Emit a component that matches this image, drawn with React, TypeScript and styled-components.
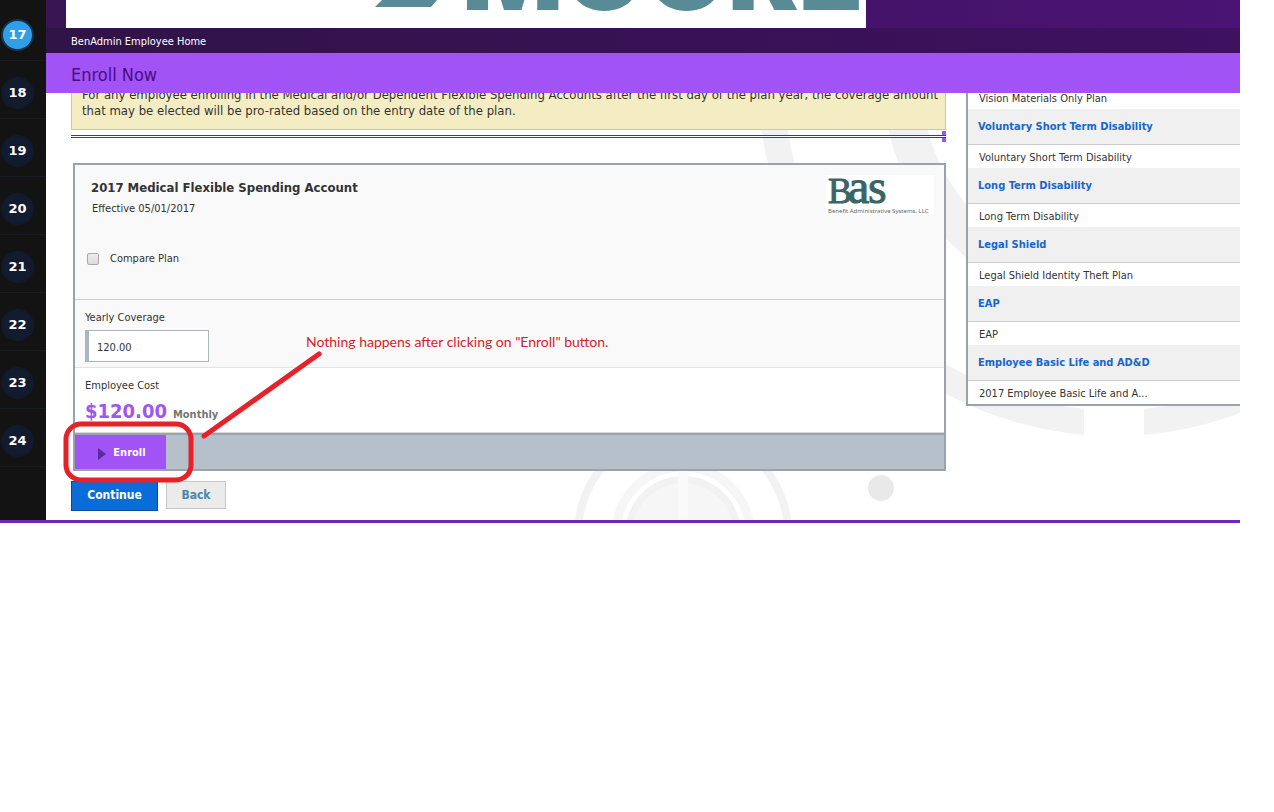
import React from "react";
import styled, { createGlobalStyle } from "styled-components";

const sans = `"DejaVu Sans Condensed", "Noto Sans", sans-serif`;

const Global = createGlobalStyle`
  *, *::before, *::after { box-sizing: border-box; }
  body { margin: 0; background: #fff; color: #333; font-family: ${sans}; font-size: 11px; line-height: 16px; }
  h1, h2, h3, p, ul, ol { margin: 0; padding: 0; font-weight: inherit; }
  ul, ol { list-style: none; }
`;

const Page = styled.div`
  position: relative;
  display: flex;
  margin-right: 34px;
  border-bottom: 3px solid #6f27ba;
  overflow: hidden;
`;

const Days = styled.nav`
  flex: 0 0 46px;
  padding-top: 3px;
  background: #131313;
`;

const Day = styled.li`
  height: 58px;
  padding: 16px 0 0 1px;
  border-bottom: 1px solid #161c26;
`;

const DayLink = styled.a<{ $current?: boolean }>`
  display: flex;
  align-items: center;
  justify-content: center;
  width: 33px;
  height: 32px;
  padding-bottom: 1px;
  border: 2px solid ${(p) => (p.$current ? "#18324c" : "#121a2b")};
  border-radius: 50%;
  background: ${(p) => (p.$current ? "#309fe9" : "#121b30")};
  color: #fff;
  font: bold 13px/16px "DejaVu Sans", sans-serif;
  text-decoration: none;
`;

const Main = styled.main`
  flex: 1;
  min-width: 0;
  position: relative;
`;

const Banner = styled.header`
  height: 28px;
  padding-left: 20px;
  background: linear-gradient(90deg, #3a1553, #4a1374);
`;

const LogoPanel = styled.div`
  width: 800px;
  max-width: 100%;
  height: 28px;
  background: #fff;
  overflow: hidden;
`;

const Crumbs = styled.div`
  padding: 6px 25px 3px;
  background: linear-gradient(90deg, #301347, #3f1161);
`;

const CrumbLink = styled.a`
  color: #fff;
  text-decoration: none;
`;

const TitleBar = styled.div`
  padding: 12px 25px 8px;
  background: #a153f6;
`;

const Title = styled.h1`
  color: #4a0d82;
  font-size: 18px;
  line-height: 20px;
`;

const Body = styled.div`
  position: relative;
  display: flex;
  gap: 20px;
  padding-left: 25px;
  overflow: hidden;
`;

const Backdrop = styled.svg`
  position: absolute;
  inset: 0;
`;

const Plans = styled.section`
  position: relative;
  flex: 1;
  min-width: 0;
  padding-bottom: 9px;
`;

const NoticeClip = styled.div`
  display: flex;
  align-items: flex-end;
  height: 37px;
  overflow: hidden;
`;

const Notice = styled.p`
  width: 100%;
  padding: 10px 4px 10px 10px;
  border: 1px solid #e2c766;
  background: #f4edc4;
  font-size: 13px;
`;

const Divider = styled.div`
  display: flex;
  align-items: center;
  height: 11px;
  margin: 1px 0 21px;
  border-right: 4px solid #9d55ee;
`;

const Rule = styled.div`
  flex: 1;
  height: 3px;
  margin-right: -4px;
  border: solid #6320a8;
  border-width: 1px 0;
  background: #fff;
`;

const Card = styled.form`
  margin-left: 2px;
  border: 2px solid #9aa2ab;
  background: #fff;
`;

const CardHead = styled.div`
  display: flex;
  justify-content: space-between;
  height: 135px;
  padding: 10px 10px 0 12px;
  border-bottom: 1px solid #cfcfcf;
  background: #f9f9f9;
`;

const PlanName = styled.h2`
  padding: 5px 0 0 4px;
  font-size: 13px;
  font-weight: bold;
`;

const Effective = styled.p`
  padding: 5px 0 34px 5px;
`;

const Check = styled.label`
  display: flex;
  align-items: center;
  gap: 11px;
`;

const Tick = styled.input`
  appearance: none;
  width: 12px;
  height: 12px;
  margin: 0;
  border: 1px solid #a9a9a9;
  border-radius: 2px;
  background: linear-gradient(#ececec, #dcdcdc);
`;

const Field = styled.div<{ $shaded?: boolean }>`
  display: flex;
  flex-direction: column;
  align-items: flex-start;
  padding: 10px 10px 5px;
  border-bottom: 1px solid ${(p) => (p.$shaded ? "#e3e3e3" : "#d8d8d8")};
  background: ${(p) => (p.$shaded ? "#f9f9f9" : "#fff")};
`;

const Amount = styled.input`
  width: 124px;
  height: 32px;
  margin-top: 4px;
  padding: 2px 8px 0;
  border: 1px solid #a9b7bd;
  border-left-width: 4px;
  background: #fff;
  color: #333;
  font: 11px/16px ${sans};
`;

const Cost = styled.div`
  display: flex;
  align-items: baseline;
  gap: 6px;
  padding-top: 5px;
  color: #757575;
  font-weight: bold;
  line-height: 24px;
`;

const Price = styled.strong`
  color: #a057ee;
  font-size: 20px;
`;

const Actions = styled.div`
  display: flex;
  border-top: 2px solid #9aa2ab;
  background: #b6c0ca;
`;

const EnrollButton = styled.button`
  display: flex;
  align-items: center;
  justify-content: center;
  gap: 7px;
  width: 91px;
  height: 34px;
  padding: 2px 0 0 3px;
  border: 0;
  background: #a153f6;
  color: #fff;
  font: bold 11px/16px ${sans};
`;

const Footer = styled.div`
  display: flex;
  gap: 8px;
  padding-top: 10px;
`;

const FooterButton = styled.button<{ $primary?: boolean }>`
  width: ${(p) => (p.$primary ? 87 : 60)}px;
  height: ${(p) => (p.$primary ? 30 : 28)}px;
  padding: 0 0 ${(p) => (p.$primary ? 2 : 0)}px;
  border: 1px solid ${(p) => (p.$primary ? "#0a4a9a" : "#c6c6c6")};
  background: ${(p) => (p.$primary ? "#0a6cd8" : "#ebebeb")};
  color: ${(p) => (p.$primary ? "#fff" : "#4488b0")};
  font: bold 12px/16px ${sans};
`;

const Benefits = styled.aside`
  position: relative;
  flex: 0 0 274px;
  align-self: flex-start;
  border: solid #9aa2ab;
  border-width: 0 0 2px 2px;
  background: #fff;
`;

const BenefitTitle = styled.h3`
  padding: 10px 10px 0;
  height: 36px;
  border-bottom: 1px solid #cdcdcd;
  background: #f0f0f0;
  color: #1766cc;
  font-size: 11px;
  font-weight: bold;
`;

const BenefitItem = styled.p<{ $first?: boolean }>`
  height: ${(p) => (p.$first ? 18 : 23)}px;
  padding: ${(p) => (p.$first ? 0 : 5)}px 11px 0;
  margin-top: ${(p) => (p.$first ? -2 : 0)}px;
`;

const Markup = styled.svg`
  position: absolute;
  top: 0;
  left: 0;
  pointer-events: none;
`;

const Remark = styled.p`
  position: absolute;
  top: 334px;
  left: 306px;
  color: #d4222a;
  font: 14px/16px Lato, sans-serif;
  white-space: nowrap;
`;

const days = [17, 18, 19, 20, 21, 22, 23, 24];

const benefits = [
  ["Voluntary Short Term Disability", "Voluntary Short Term Disability"],
  ["Long Term Disability", "Long Term Disability"],
  ["Legal Shield", "Legal Shield Identity Theft Plan"],
  ["EAP", "EAP"],
  ["Employee Basic Life and AD&D", "2017 Employee Basic Life and A..."],
];

function MooreLogo() {
  return (
    <svg width="800" height="28" role="img" aria-label="Moore">
      <path d="M309 7 L316 0 H371 L365 7 Z" fill="#588b95" />
      <text x="396" y="10" fill="#588b95" fontFamily="Inter" fontWeight="900" fontSize="106">
        MOORE
      </text>
    </svg>
  );
}

function BasLogo() {
  return (
    <svg width="108" height="40" role="img" aria-label="Benefit Administrative Systems, LLC">
      <rect width="108" height="40" fill="#fff" />
      <text y="28" fill="#3a6465" stroke="#3a6465" fontFamily="Liberation Serif, serif" fontSize="48">
        <tspan x="2" fontSize="36">B</tspan>
        <tspan x="22">a</tspan>
        <tspan x="42">s</tspan>
      </text>
      <text x="2" y="38" fill="#666" fontFamily="Noto Sans" fontSize="6">
        Benefit Administrative Systems, LLC
      </text>
    </svg>
  );
}

function Rings() {
  return (
    <Backdrop width="1194" height="427" aria-hidden="true">
      <g fill="none" stroke="#f2f2f2">
        <circle cx="1068" cy="-13" r="343" strokeWidth="26" />
        <circle cx="1068" cy="-13" r="212" strokeWidth="38" />
        <circle cx="637" cy="441" r="105" strokeWidth="8" />
        <circle cx="637" cy="441" r="67" strokeWidth="9" stroke="#f6f6f6" />
      </g>
      <rect x="1038" y="0" width="60" height="427" fill="#fff" />
      <circle cx="637" cy="441" r="58" fill="#f2f2f2" />
      <circle cx="637" cy="441" r="51" fill="#f6f6f6" />
      <rect x="632" y="378" width="10" height="49" fill="#fafafa" />
      <circle cx="835" cy="395" r="13" fill="#e9e9e9" />
    </Backdrop>
  );
}

export default function App() {
  return (
    <Page>
      <Global />
      <Days aria-label="Days">
        <ul>
          {days.map((d) => (
            <Day key={d}>
              <DayLink href="#" $current={d === 17}>{d}</DayLink>
            </Day>
          ))}
        </ul>
      </Days>
      <Main>
        <Banner>
          <LogoPanel><MooreLogo /></LogoPanel>
        </Banner>
        <Crumbs><CrumbLink href="#">BenAdmin Employee Home</CrumbLink></Crumbs>
        <TitleBar><Title>Enroll Now</Title></TitleBar>
        <Body>
          <Rings />
          <Plans>
            <NoticeClip>
              <Notice>
                For any employee enrolling in the Medical and/or Dependent Flexible Spending Accounts after the first day of the plan year, the coverage amount that may be elected will be pro-rated based on the entry date of the plan.
              </Notice>
            </NoticeClip>
            <Divider><Rule /></Divider>
            <Card onSubmit={(e) => e.preventDefault()}>
              <CardHead>
                <div>
                  <PlanName>2017 Medical Flexible Spending Account</PlanName>
                  <Effective>Effective 05/01/2017</Effective>
                  <Check><Tick type="checkbox" />Compare Plan</Check>
                </div>
                <BasLogo />
              </CardHead>
              <Field $shaded>
                <label htmlFor="coverage">Yearly Coverage</label>
                <Amount id="coverage" type="text" defaultValue="120.00" />
              </Field>
              <Field>
                <span>Employee Cost</span>
                <Cost><Price>$120.00</Price>Monthly</Cost>
              </Field>
              <Actions>
                <EnrollButton type="submit">
                  <svg width="8" height="14" aria-hidden="true"><path d="M0 2 L8 8 L0 14 Z" fill="#5c2a9c" /></svg>
                  Enroll
                </EnrollButton>
              </Actions>
            </Card>
            <Footer>
              <FooterButton type="button" $primary>Continue</FooterButton>
              <FooterButton type="button">Back</FooterButton>
            </Footer>
          </Plans>
          <Benefits>
            <BenefitItem $first>Vision Materials Only Plan</BenefitItem>
            {benefits.map(([title, item]) => (
              <div key={title}>
                <BenefitTitle>{title}</BenefitTitle>
                <BenefitItem>{item}</BenefitItem>
              </div>
            ))}
          </Benefits>
        </Body>
      </Main>
      <Markup width="640" height="520" aria-hidden="true">
        <g fill="none" stroke="#e62129" strokeWidth="5" strokeLinecap="round">
          <rect x="66" y="424" width="125" height="56" rx="15" />
          <path d="M319 354 L204 436" />
        </g>
      </Markup>
      <Remark>Nothing happens after clicking on "Enroll" button.</Remark>
    </Page>
  );
}
